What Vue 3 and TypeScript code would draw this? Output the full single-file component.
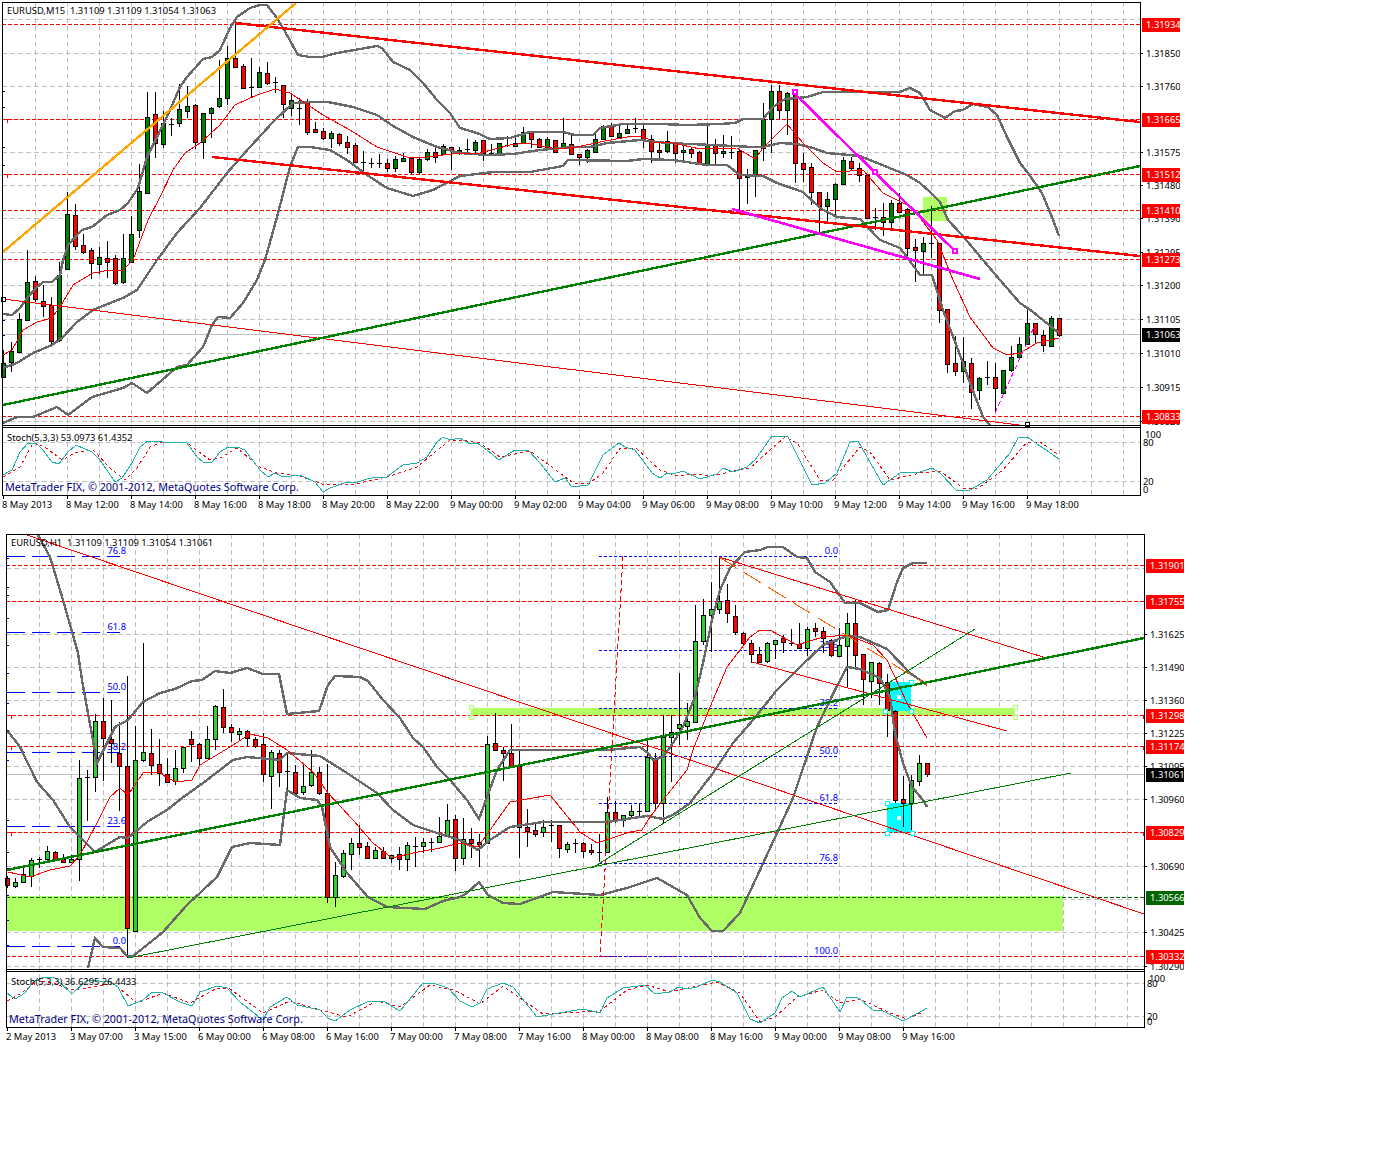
<script setup lang="ts">
// [body top, body bottom, wick top, wick bottom, kind] kind: 1 bull, 0 bear, 2 doji
type Bar = [number, number, number, number, number]
type Seg = [number, number, number, number, string]
type Mark = [number, string]
type Handle = [number, number, string]

interface Chart {
  id: string
  viewBox: string
  width: number
  height: number
  x0: number
  frame: { left: number; right: number; top: number; mainBottom: number; stochTop: number; bottom: number }
  title: string
  titleX: number
  titleY: number
  stoch: string
  stochY: number
  copyX: number
  copyY: number
  gridY: number[]
  stochGrid: number[]
  hline: number
  levels: [number, string][]
  prices: Mark[]
  tags: [number, string, string][]
  stochAxis: [number, number, string][]
  times: string[]
  timeY: number
  zones: [number, number, number, number, string][]
  bars: Bar[]
  upper: string
  middle: string
  lower: string
  ma: string
  main: string
  signal: string
  lines: Seg[]
  handles: Handle[]
  hooks: [number, number][]
  leftTicks: number[]
  fibo: { x1: number; x2: number; cls: string; items: [number, number, string][] }[]
}

const m15Bars: Bar[] = [
  [363,377,350,378,1],[351,362,342,372,1],[319,352,313,352,1],[282,320,250,320,1],[281,299,276,302,0],[301,306,285,317,0],
  [305,341,297,344,0],[275,340,262,342,1],[214,269,192,270,1],[215,246,204,250,0],[245,252,234,254,0],[250,263,248,279,0],
  [257,264,247,274,1],[258,262,241,278,0],[258,283,255,285,0],[258,282,234,284,1],[234,262,216,262,1],[191,230,164,238,1],
  [117,193,92,193,1],[114,143,92,158,0],[123,144,111,148,1],[124,124,118,136,2],[109,123,84,127,1],[106,111,86,118,1],
  [105,142,104,149,0],[113,142,113,159,1],[108,113,107,138,1],[98,106,60,108,1],[58,98,46,105,1],[58,67,23,68,0],
  [66,88,64,88,0],[87,87,58,98,2],[72,87,67,88,1],[73,83,62,85,0],[82,82,77,93,2],[85,104,85,118,0],
  [100,108,93,116,1],[108,108,98,125,2],[102,132,99,135,0],[129,132,122,133,0],[131,138,128,140,0],[133,138,131,148,1],
  [134,143,133,146,0],[142,147,136,154,0],[145,162,143,163,0],[162,162,151,172,2],[163,163,158,168,2],[163,163,154,168,2],
  [163,168,159,172,0],[159,168,156,172,1],[158,161,153,162,1],[158,172,157,174,0],[159,172,158,174,1],[152,159,149,161,1],
  [152,157,148,163,0],[146,154,144,155,1],[147,150,147,170,0],[150,152,147,155,1],[149,149,139,152,2],[142,150,140,153,1],
  [140,153,140,161,0],[153,153,144,154,2],[143,153,143,154,1],[145,145,136,147,2],[143,146,138,147,1],[132,143,127,144,1],
  [132,139,132,148,0],[139,147,138,148,0],[139,148,137,149,1],[140,152,140,153,0],[143,148,118,148,1],[144,154,135,155,0],
  [154,157,154,165,0],[150,157,149,163,1],[139,152,132,153,1],[126,139,125,140,1],[126,136,123,137,0],[133,137,126,137,1],
  [129,133,125,134,1],[128,128,118,133,2],[129,139,123,148,0],[139,151,135,163,0],[150,152,142,158,0],[141,151,131,153,1],
  [142,153,142,163,0],[150,152,144,162,1],[149,153,147,158,0],[152,164,151,164,0],[144,164,125,165,1],[144,153,139,164,0],
  [151,153,135,158,1],[152,152,136,159,2],[151,178,150,210,0],[176,177,169,204,1],[150,174,150,197,1],[119,148,103,161,1],
  [91,119,85,153,1],[91,110,85,119,0],[93,110,92,135,1],[95,163,92,183,0],[163,169,153,182,0],[167,192,163,205,0],
  [192,206,192,233,0],[199,206,192,222,1],[184,199,183,215,1],[160,184,157,185,1],[161,168,157,170,0],[168,175,163,182,0],
  [175,218,174,219,0],[217,217,208,230,2],[217,222,203,236,0],[203,222,200,230,1],[203,212,193,212,0],[209,248,208,258,0],
  [247,250,239,282,0],[243,251,237,275,1],[243,243,206,258,2],[243,310,243,323,0],[309,364,309,373,0],[363,371,336,376,0],
  [361,371,337,383,1],[363,392,358,409,0],[378,390,377,400,1],[377,377,361,385,2],[377,388,363,413,0],[370,393,370,394,1],
  [357,370,346,372,1],[344,357,337,358,1],[323,344,310,345,1],[323,334,323,343,0],[335,345,330,352,0],[318,346,316,347,1],
  [318,335,318,337,0]
]

const h1Bars: Bar[] = [
  [878,885,876,888,0],[882,886,878,888,1],[874,882,867,883,1],[860,876,858,887,1],[859,859,857,868,2],[851,859,846,860,1],
  [852,860,851,861,0],[859,862,854,863,0],[859,862,855,863,1],[778,859,760,881,1],[777,777,770,821,2],[721,777,714,792,1],
  [721,738,698,781,0],[739,743,700,763,0],[753,766,722,811,0],[766,928,676,958,0],[760,931,726,932,1],[752,760,643,762,1],
  [753,765,729,775,0],[764,773,739,786,0],[774,782,758,783,0],[768,781,750,785,1],[747,768,747,773,1],[739,744,731,762,0],
  [744,758,743,767,0],[739,758,726,758,1],[706,739,705,750,1],[707,727,689,733,0],[727,732,724,742,0],[731,734,728,740,1],
  [731,738,730,747,0],[739,746,737,748,0],[744,774,733,782,0],[752,776,750,809,1],[753,772,750,787,0],[771,771,753,795,2],
  [772,793,765,795,0],[786,792,765,795,1],[772,785,750,787,1],[772,793,767,795,0],[793,897,764,903,0],[875,897,862,907,1],
  [853,876,850,878,1],[843,854,838,870,1],[843,847,825,855,0],[846,858,842,859,0],[850,858,847,859,1],[851,858,847,859,0],
  [855,858,855,863,1],[854,859,847,870,0],[845,859,842,871,1],[846,846,837,867,2],[842,846,838,853,1],[842,842,838,852,2],
  [836,842,817,843,1],[820,836,804,837,1],[819,858,815,871,0],[839,858,818,865,1],[839,843,828,858,0],[842,844,834,867,0],
  [744,843,736,843,1],[743,750,713,750,0],[750,753,747,781,0],[753,766,724,766,0],[766,827,751,858,0],[827,831,809,847,0],
  [830,834,822,837,0],[827,832,820,837,1],[825,825,820,842,2],[825,848,825,858,0],[844,849,842,853,1],[843,843,839,853,2],
  [843,851,842,858,0],[850,852,844,855,0],[852,852,834,862,2],[812,852,797,853,1],[812,820,801,823,0],[815,820,815,827,1],
  [811,815,805,819,1],[811,811,803,818,2],[757,811,741,812,1],[758,803,753,810,0],[737,803,715,823,1],[732,737,715,782,1],
  [724,728,673,745,1],[721,726,703,740,1],[641,722,605,723,1],[615,641,599,645,1],[609,615,582,652,1],[601,609,557,614,1],
  [600,613,584,623,0],[616,632,605,635,0],[633,643,632,645,0],[643,654,640,663,0],[654,662,647,663,0],[643,661,642,663,1],
  [640,644,640,659,1],[638,642,635,653,0],[643,643,629,646,2],[644,648,623,648,0],[629,648,627,656,1],[628,631,623,637,0],
  [631,638,627,653,0],[640,655,639,657,0],[645,656,628,657,1],[623,646,613,688,1],[623,655,600,667,0],[654,679,654,705,0],
  [662,681,662,698,1],[663,683,662,705,0],[682,710,674,737,0],[711,800,710,803,0],[799,803,776,827,0],[780,803,775,830,1],
  [763,781,755,786,1],[763,774,763,777,0]
]

const copyright = 'MetaTrader FIX, © 2001-2012, MetaQuotes Software Corp.'

const charts: Chart[] = [
  {
    id: 'm15',
    viewBox: '0 0 1180 520',
    width: 1180,
    height: 520,
    x0: 3,
    frame: { left: 2, right: 1140, top: 2, mainBottom: 425, stochTop: 427, bottom: 495 },
    title: 'EURUSD,M15  1.31109 1.31109 1.31054 1.31063',
    titleX: 7,
    titleY: 14,
    stoch: 'Stoch(5,3,3) 53.0973 61.4352',
    stochY: 441,
    copyX: 5,
    copyY: 491,
    gridY: [19, 53, 86, 119, 152, 185, 218, 252, 285, 319, 353, 387, 421],
    stochGrid: [442, 481],
    hline: 334,
    levels: [[24, 'red'], [119, 'red'], [174, 'red'], [210, 'red'], [259, 'red'], [416, 'red']],
    prices: [[53, '1.31850'], [86, '1.31760'], [152, '1.31575'], [185, '1.31480'], [218, '1.31390'], [252, '1.31295'], [285, '1.31200'], [319, '1.31105'], [353, '1.31010'], [387, '1.30915'], [421, '1.30820']],
    tags: [[24, '1.31934', 'red'], [119, '1.31665', 'red'], [174, '1.31512', 'red'], [210, '1.31410', 'red'], [259, '1.31273', 'red'], [334, '1.31063', 'black'], [416, '1.30833', 'red']],
    stochAxis: [[1145, 434, '100'], [1143, 442, '80'], [1143, 481, '20'], [1143, 489, '0']],
    times: ['8 May 2013', '8 May 12:00', '8 May 14:00', '8 May 16:00', '8 May 18:00', '8 May 20:00', '8 May 22:00', '9 May 00:00', '9 May 02:00', '9 May 04:00', '9 May 06:00', '9 May 08:00', '9 May 10:00', '9 May 12:00', '9 May 14:00', '9 May 16:00', '9 May 18:00'],
    timeY: 508,
    zones: [[923, 197, 24, 24, 'lime']],
    bars: m15Bars,
    upper: '3,314 12,315 20,308 28,297 36,288 43,282 52,282 60,275 63,260 68,245 82,230 92,227 107,215 120,210 128,203 138,188 147,157 157,137 170,110 180,87 187,77 203,59 212,57 220,50 230,28 237,17 250,8 260,5 267,5 277,18 287,35 298,55 310,57 322,57 337,53 360,49 377,46 382,48 393,62 410,70 423,83 437,100 450,113 460,128 477,133 490,139 510,138 530,132 563,132 575,135 593,135 600,128 623,124 660,124 687,125 720,124 735,123 743,119 763,119 773,107 785,99 797,98 807,97 823,92 867,92 900,92 910,88 920,93 930,110 945,118 955,111 963,110 973,104 988,107 997,115 1007,137 1020,163 1028,173 1042,193 1052,217 1059,236',
    middle: '3,368 17,363 33,353 52,345 62,338 77,322 93,310 123,298 137,290 157,260 177,233 200,208 227,173 250,147 273,122 293,103 310,102 328,102 353,107 377,115 393,126 413,137 437,147 460,153 487,155 513,154 540,150 573,147 590,147 607,143 640,140 667,143 713,145 753,147 763,147 780,143 797,144 813,148 827,153 860,156 887,167 907,175 920,183 930,192 940,202 948,220 962,235 983,260 1000,280 1020,303 1033,312 1059,333',
    lower: '3,423 17,417 33,417 57,407 68,415 92,397 123,388 132,383 147,393 177,367 187,365 203,347 212,325 218,317 230,318 243,303 257,280 265,260 277,217 290,167 298,147 310,147 330,150 347,160 367,175 387,188 413,196 433,190 460,176 493,172 530,172 563,166 568,160 627,161 643,159 673,160 707,165 727,165 740,175 763,176 777,183 803,192 820,208 837,217 860,219 880,240 900,248 907,257 920,275 932,275 943,310 963,363 970,383 983,417 990,425',
    ma: '3,355 12,350 23,330 37,322 52,318 63,302 73,285 93,273 110,270 123,270 133,260 148,220 160,197 173,170 185,153 200,143 220,125 235,105 257,95 275,89 290,93 308,105 323,115 350,130 377,147 410,158 427,157 460,153 480,153 510,145 527,143 557,149 577,147 600,142 633,136 643,136 653,142 673,143 700,149 737,148 755,159 763,148 787,124 803,143 823,163 837,172 863,170 883,193 907,205 920,218 937,240 945,260 953,280 970,317 993,348 1007,355 1020,353 1037,343 1059,338',
    main: '3,475 12,470 20,452 28,443 37,444 43,450 52,462 59,464 68,452 76,445 92,452 100,460 115,482 122,478 132,463 140,447 148,441 163,442 187,443 197,457 203,462 212,462 220,452 228,447 237,447 245,450 260,470 268,477 275,473 283,477 300,475 315,482 323,492 330,488 347,482 355,483 367,479 377,477 387,477 403,465 417,463 427,457 437,442 443,437 450,440 460,438 468,443 477,443 487,450 499,460 515,450 528,450 540,463 555,482 565,478 572,487 588,485 603,455 619,443 625,447 635,450 652,473 660,478 667,473 673,474 683,471 700,479 717,474 723,468 733,472 747,467 755,460 772,436 788,437 812,485 825,483 837,473 850,442 858,441 883,485 900,473 920,472 932,468 940,473 957,491 970,490 987,480 1010,453 1018,438 1027,437 1043,448 1059,459',
    signal: '3,477 20,467 33,443 45,447 62,460 75,453 93,450 110,468 125,480 137,468 150,447 163,442 187,443 210,460 220,458 237,448 260,467 277,473 300,476 325,485 355,484 387,477 417,467 440,448 450,440 460,440 480,443 500,457 530,451 560,473 573,483 588,484 603,473 620,448 637,449 660,470 677,476 693,474 713,476 733,471 750,468 770,450 785,437 797,443 820,480 833,480 860,447 870,452 890,480 920,473 940,471 963,488 977,489 1003,470 1027,442 1040,442 1059,455',
    lines: [
      [3, 299, 1027, 426, 'thin-red'],
      [3, 405, 1140, 166, 'thick-green'],
      [235, 23, 1140, 122, 'thick-red'],
      [212, 157, 1140, 256, 'thick-red'],
      [3, 252, 296, 3, 'orange'],
      [793, 92, 955, 251, 'magenta'],
      [732, 209, 980, 279, 'magenta'],
      [995, 413, 1035, 325, 'magenta-dash']
    ],
    handles: [[795, 92, 'pink'], [875, 172, 'pink'], [955, 251, 'pink'], [3, 299, 'dark'], [1027, 424, 'dark']],
    hooks: [[4, 119], [4, 174], [1137, 119], [1137, 174], [1137, 259]],
    leftTicks: [91, 107, 147, 165, 320, 335],
    fibo: []
  },
  {
    id: 'h1',
    viewBox: '0 530 1184 520',
    width: 1184,
    height: 520,
    x0: 7,
    frame: { left: 6, right: 1144, top: 534, mainBottom: 969, stochTop: 971, bottom: 1027 },
    title: 'EURUSD,H1  1.31109 1.31109 1.31054 1.31061',
    titleX: 11,
    titleY: 546,
    stoch: 'Stoch(5,3,3) 36.6295 26.4433',
    stochY: 985,
    copyX: 9,
    copyY: 1023,
    gridY: [568, 601, 634, 667, 700, 733, 766, 799, 832, 866, 899, 932, 966],
    stochGrid: [983, 1016],
    hline: 774,
    levels: [[565, 'red'], [601, 'red'], [715, 'red'], [746, 'red'], [832, 'red'], [897, 'dark'], [956, 'red']],
    prices: [[634, '1.31625'], [667, '1.31490'], [700, '1.31360'], [733, '1.31225'], [766, '1.31095'], [799, '1.30960'], [866, '1.30690'], [932, '1.30425'], [966, '1.30290']],
    tags: [[565, '1.31901', 'red'], [601, '1.31755', 'red'], [715, '1.31298', 'red'], [746, '1.31174', 'red'], [774, '1.31061', 'black'], [832, '1.30829', 'red'], [897, '1.30566', 'dark'], [956, '1.30332', 'red']],
    stochAxis: [[1149, 978, '100'], [1147, 983, '80'], [1147, 1016, '20'], [1147, 1021, '0']],
    times: ['2 May 2013', '3 May 07:00', '3 May 15:00', '6 May 00:00', '6 May 08:00', '6 May 16:00', '7 May 00:00', '7 May 08:00', '7 May 16:00', '8 May 00:00', '8 May 08:00', '8 May 16:00', '9 May 00:00', '9 May 08:00', '9 May 16:00'],
    timeY: 1040,
    zones: [
      [7, 896, 1056, 35, 'lime'],
      [471, 708, 544, 8, 'lime'],
      [885, 682, 26, 29, 'cyan'],
      [887, 803, 25, 30, 'cyan']
    ],
    bars: h1Bars,
    upper: '38,535 50,557 63,600 78,653 82,680 97,763 110,737 115,727 128,720 143,702 160,693 175,689 192,681 202,680 215,671 230,673 247,668 263,674 279,674 287,714 319,711 328,685 335,676 360,677 368,681 383,700 400,718 413,738 423,747 437,767 450,780 467,800 479,819 487,797 497,770 510,750 607,750 640,747 648,753 653,760 663,757 673,743 683,727 695,697 703,663 712,620 720,590 730,568 745,552 760,550 768,547 783,547 797,557 807,558 815,572 830,582 845,603 860,603 878,612 888,610 897,582 903,568 913,563 927,563',
    middle: '7,730 20,747 37,782 53,800 70,827 95,852 120,837 128,838 147,822 167,810 182,798 203,783 233,760 247,757 280,760 287,753 320,756 347,773 377,793 393,810 413,825 437,833 460,840 478,850 490,840 510,827 543,822 590,822 607,822 633,818 647,816 663,819 673,815 690,803 700,790 713,773 733,743 753,720 777,690 800,667 823,645 847,636 860,637 887,649 910,673 927,685',
    lower: '88,968 95,938 103,947 120,948 127,956 133,956 147,945 163,932 187,905 217,877 232,847 250,843 280,845 287,790 300,798 317,800 322,807 330,847 347,873 368,897 387,907 425,909 443,901 460,897 467,893 479,882 488,895 503,903 520,904 553,892 600,895 627,888 657,878 687,895 700,918 712,931 723,931 740,913 760,870 777,833 793,798 800,777 817,727 835,690 847,667 860,669 880,678 890,697 895,733 903,763 912,787 923,800 927,807',
    ma: '8,872 30,877 50,870 70,866 80,855 97,823 110,797 120,788 128,795 143,773 160,772 167,778 177,782 192,780 200,765 230,747 250,734 268,738 287,750 313,772 328,793 353,820 373,843 392,858 413,853 440,848 460,843 478,847 510,802 550,795 580,832 597,843 630,832 642,830 650,817 663,800 687,770 693,750 710,707 727,667 750,637 760,630 770,630 797,645 823,637 847,635 873,645 887,660 907,703 927,738',
    main: '7,993 15,999 25,993 33,982 45,977 55,978 72,994 87,980 110,982 118,987 128,1006 143,1000 152,992 163,993 180,1002 192,1006 200,992 217,986 227,988 240,1002 263,1020 270,1007 287,997 297,1005 320,1010 328,1018 335,1021 350,1010 367,1002 383,1001 400,1011 423,983 433,983 448,988 460,1001 472,1007 480,1003 487,989 503,983 513,987 537,1017 553,1014 583,1009 600,1013 607,998 623,988 645,985 655,994 670,992 678,987 687,989 697,987 712,980 720,982 737,993 750,1019 760,1023 775,1013 782,998 792,991 800,997 823,987 840,1012 847,997 857,997 873,1010 883,1011 903,1021 920,1012 927,1008',
    signal: '7,1001 22,993 37,980 53,983 72,990 87,988 113,983 137,1003 163,993 190,1003 217,988 230,989 263,1013 290,1001 320,1010 347,1017 377,1001 400,1007 430,985 453,990 460,993 480,1004 503,986 543,1014 600,1011 627,990 647,985 670,992 693,987 717,982 740,993 760,1022 775,1017 797,997 823,990 840,1003 860,999 890,1013 907,1019 923,1012',
    lines: [
      [27, 535, 1144, 914, 'thin-red'],
      [719, 557, 1043, 657, 'thin-red'],
      [752, 662, 1007, 731, 'thin-red'],
      [719, 557, 927, 685, 'orange-dash'],
      [623, 556, 600, 957, 'red-dash'],
      [128, 958, 1071, 773, 'thin-green'],
      [592, 868, 975, 629, 'thin-green'],
      [7, 870, 1144, 638, 'thick-green']
    ],
    handles: [
      [471, 707, 'lime'], [471, 717, 'lime'], [1015, 707, 'lime'], [1015, 717, 'lime'],
      [911, 682, 'cyan'], [911, 711, 'cyan'], [885, 711, 'cyan'],
      [887, 803, 'cyan'], [887, 833, 'cyan'], [912, 833, 'cyan'],
      [743, 712, 'white'], [899, 697, 'white'], [899, 818, 'white']
    ],
    hooks: [[8, 715], [8, 746], [8, 832], [1140, 715], [1140, 746], [1140, 832]],
    leftTicks: [558, 565, 587, 595, 618, 645, 673, 703, 730, 760, 820, 852, 868, 895, 920, 945],
    fibo: [
      {
        x1: 7,
        x2: 120,
        cls: 'fibo-long',
        items: [[556, 126, '76.8'], [632, 126, '61.8'], [692, 126, '50.0'], [752, 126, '38.2'], [826, 126, '23.6'], [946, 126, '0.0']]
      },
      {
        x1: 599,
        x2: 838,
        cls: 'fibo-short',
        items: [[556, 838, '0.0'], [650, 838, '23.6'], [708, 838, '38.2'], [756, 838, '50.0'], [803, 838, '61.8'], [863, 838, '76.8'], [956, 838, '100.0']]
      }
    ]
  }
]

function gridXs(chart: Chart): number[] {
  const xs: number[] = []
  for (let x = chart.x0 + 32; x < chart.frame.right; x += 32) xs.push(x)
  return xs
}

function tickXs(chart: Chart): number[] {
  return chart.times.map((_, i) => chart.x0 + 64 * i)
}
</script>

<template>
  <main class="terminal">
    <svg
      v-for="chart in charts"
      :key="chart.id"
      class="chart"
      :class="chart.id"
      :width="chart.width"
      :height="chart.height"
      :viewBox="chart.viewBox"
    >
      <!-- grid -->
      <g class="grid">
        <line
          v-for="x in gridXs(chart)"
          :key="x"
          :x1="x + 0.5"
          :x2="x + 0.5"
          :y1="chart.frame.top"
          :y2="chart.frame.bottom"
        />
        <line
          v-for="y in [...chart.gridY, ...chart.stochGrid]"
          :key="y"
          :x1="chart.frame.left"
          :x2="chart.frame.right"
          :y1="y + 0.5"
          :y2="y + 0.5"
        />
      </g>

      <rect
        v-for="(z, i) in chart.zones"
        :key="i"
        :class="`zone-${z[4]}`"
        :x="z[0]"
        :y="z[1]"
        :width="z[2]"
        :height="z[3]"
      />

      <line class="bid" :x1="chart.frame.left" :x2="chart.frame.right" :y1="chart.hline + 0.5" :y2="chart.hline + 0.5" />

      <line
        v-for="l in chart.levels"
        :key="l[0]"
        :class="`level-${l[1]}`"
        :x1="chart.frame.left"
        :x2="chart.frame.right"
        :y1="l[0] + 0.5"
        :y2="l[0] + 0.5"
      />

      <path
        v-for="(h, i) in chart.hooks"
        :key="i"
        class="hook"
        :d="`M${h[0]} ${h[1] + 0.5}h3.5v3`"
      />

      <template v-for="f in chart.fibo" :key="f.cls">
        <template v-for="item in f.items" :key="item[0]">
          <line :class="f.cls" :x1="f.x1" :x2="f.x2" :y1="item[0] + 0.5" :y2="item[0] + 0.5" />
          <text class="fibo-label" :x="item[1]" :y="item[0] - 2">{{ item[2] }}</text>
        </template>
      </template>

      <!-- candles -->
      <g v-for="(b, i) in chart.bars" :key="i">
        <line class="wick" :x1="chart.x0 + 8 * i + 0.5" :x2="chart.x0 + 8 * i + 0.5" :y1="b[2]" :y2="b[3]" />
        <line
          v-if="b[4] === 2"
          class="wick"
          :x1="chart.x0 + 8 * i - 2"
          :x2="chart.x0 + 8 * i + 3"
          :y1="b[0] + 0.5"
          :y2="b[0] + 0.5"
        />
        <rect
          v-else
          :class="b[4] === 1 ? 'bull' : 'bear'"
          :x="chart.x0 + 8 * i - 1.5"
          :y="b[0] + 0.5"
          width="4"
          :height="b[1] - b[0]"
        />
      </g>

      <!-- indicators -->
      <polyline class="band" :points="chart.upper" />
      <polyline class="band" :points="chart.middle" />
      <polyline class="band" :points="chart.lower" />
      <polyline class="ma" :points="chart.ma" />

      <line
        v-for="(s, i) in chart.lines"
        :key="i"
        :class="s[4]"
        :x1="s[0]"
        :y1="s[1]"
        :x2="s[2]"
        :y2="s[3]"
      />

      <rect
        v-for="(h, i) in chart.handles"
        :key="i"
        :class="`handle-${h[2]}`"
        :x="h[0] - 2"
        :y="h[1] - 2"
        width="4"
        height="4"
      />

      <polyline class="stoch-signal" :points="chart.signal" />
      <polyline class="stoch-main" :points="chart.main" />

      <text class="label" :x="chart.titleX" :y="chart.titleY">{{ chart.title }}</text>
      <text class="label" :x="chart.titleX" :y="chart.stochY">{{ chart.stoch }}</text>
      <text class="copyright" :x="chart.copyX" :y="chart.copyY">{{ copyright }}</text>

      <!-- frame -->
      <g class="frame">
        <rect
          :x="chart.frame.left + 0.5"
          :y="chart.frame.top + 0.5"
          :width="chart.frame.right - chart.frame.left"
          :height="chart.frame.bottom - chart.frame.top"
        />
        <line :x1="chart.frame.left" :x2="chart.frame.right" :y1="chart.frame.mainBottom + 0.5" :y2="chart.frame.mainBottom + 0.5" />
        <line :x1="chart.frame.left" :x2="chart.frame.right" :y1="chart.frame.stochTop + 0.5" :y2="chart.frame.stochTop + 0.5" />
        <line
          v-for="x in tickXs(chart)"
          :key="x"
          :x1="x + 0.5"
          :x2="x + 0.5"
          :y1="chart.frame.bottom"
          :y2="chart.frame.bottom + 4"
        />
        <line
          v-for="p in chart.prices"
          :key="p[1]"
          :x1="chart.frame.right"
          :x2="chart.frame.right + 3"
          :y1="p[0] + 0.5"
          :y2="p[0] + 0.5"
        />
        <line
          v-for="y in chart.leftTicks"
          :key="y"
          class="left-tick"
          :x1="chart.frame.left + 1"
          :x2="chart.frame.left + 3"
          :y1="y + 0.5"
          :y2="y + 0.5"
        />
      </g>

      <text
        v-for="p in chart.prices"
        :key="p[1]"
        class="label"
        :x="chart.frame.right + 6"
        :y="p[0] + 4"
      >{{ p[1] }}</text>

      <g v-for="t in chart.tags" :key="t[1]">
        <rect :class="`tag-${t[2]}`" :x="chart.frame.right + 2" :y="t[0] - 6.5" width="40" height="14" />
        <text class="tag-text" :x="chart.frame.right + 6" :y="t[0] + 4">{{ t[1] }}</text>
      </g>

      <text
        v-for="s in chart.stochAxis"
        :key="s[2]"
        class="label"
        :x="s[0]"
        :y="s[1] + 4"
      >{{ s[2] }}</text>

      <text
        v-for="(t, i) in chart.times"
        :key="t"
        class="label"
        :x="tickXs(chart)[i] - 1"
        :y="chart.timeY"
      >{{ t }}</text>
    </svg>
  </main>
</template>

<style scoped>
.terminal {
  display: flex;
  flex-direction: column;
  gap: 10px;
  min-height: 1164px;
  background: #ffffff;
}

.chart {
  display: block;
  shape-rendering: crispEdges;
  font-family: "Noto Sans", "DejaVu Sans", sans-serif;
}

.chart text {
  white-space: pre;
  shape-rendering: auto;
}

.label {
  fill: #000000;
  font-size: 9.4px;
}

.copyright {
  fill: #000080;
  font-size: 10.8px;
}

.tag-text {
  fill: #ffffff;
  font-size: 9.4px;
}

.fibo-label {
  fill: #0000ff;
  font-size: 9.4px;
  text-anchor: end;
}

.grid line {
  stroke: #c0c0c0;
  stroke-width: 1;
  stroke-dasharray: 5 3;
}

.bid {
  stroke: #c0c0c0;
  stroke-width: 1;
}

.level-red {
  stroke: #ff0000;
  stroke-width: 1;
  stroke-dasharray: 4 2;
}

.level-dark {
  stroke: #006400;
  stroke-width: 1;
  stroke-dasharray: 4 2;
}

.hook {
  fill: none;
  stroke: #ff0000;
  stroke-width: 1;
}

.zone-lime {
  fill: #b0ff66;
}

.zone-cyan {
  fill: #00ffff;
}

.wick {
  stroke: #000000;
  stroke-width: 1;
}

.bull,
.bear {
  stroke: #000000;
  stroke-width: 1;
}

.bull {
  fill: #008000;
}

.h1 .bull {
  fill: #32cd32;
}

.bear {
  fill: #ff0000;
}

.band,
.ma,
.stoch-main,
.stoch-signal {
  fill: none;
}

.band {
  stroke: #696969;
  stroke-width: 2.4;
}

.ma {
  stroke: #ff0000;
  stroke-width: 1;
}

.stoch-main {
  stroke: #20b2aa;
  stroke-width: 1;
}

.stoch-signal {
  stroke: #ff0000;
  stroke-width: 1;
  stroke-dasharray: 3 3;
}

.thin-red {
  stroke: #ff0000;
  stroke-width: 1;
}

.thick-red {
  stroke: #ff0000;
  stroke-width: 2.4;
}

.thin-green {
  stroke: #008000;
  stroke-width: 1;
}

.thick-green {
  stroke: #008000;
  stroke-width: 2.4;
}

.orange {
  stroke: #ffa500;
  stroke-width: 2.4;
}

.magenta {
  stroke: #ff00ff;
  stroke-width: 2.6;
}

.magenta-dash {
  stroke: #ff00ff;
  stroke-width: 1;
  stroke-dasharray: 5 3;
}

.orange-dash {
  stroke: #ff6000;
  stroke-width: 1;
  stroke-dasharray: 20 9;
}

.red-dash {
  stroke: #ff0000;
  stroke-width: 1;
  stroke-dasharray: 5 3;
}

.fibo-long {
  stroke: #0000ff;
  stroke-width: 1;
  stroke-dasharray: 18 7;
}

.fibo-short {
  stroke: #0000ff;
  stroke-width: 1;
  stroke-dasharray: 3 2;
}

.handle-pink,
.handle-dark,
.handle-lime,
.handle-cyan {
  fill: #ffffff;
  stroke-width: 1;
}

.handle-pink {
  stroke: #ff00ff;
  stroke-width: 2;
}

.handle-dark {
  stroke: #000000;
}

.handle-lime {
  stroke: #b0ff66;
}

.handle-cyan {
  stroke: #00ffff;
}

.handle-white {
  fill: #ffffff;
}

.frame rect {
  fill: none;
}

.frame rect,
.frame line {
  stroke: #000000;
  stroke-width: 1;
}

.frame .left-tick {
  stroke: #000080;
}

.tag-red {
  fill: #ff0000;
}

.tag-black {
  fill: #000000;
}

.tag-dark {
  fill: #006400;
}
</style>
